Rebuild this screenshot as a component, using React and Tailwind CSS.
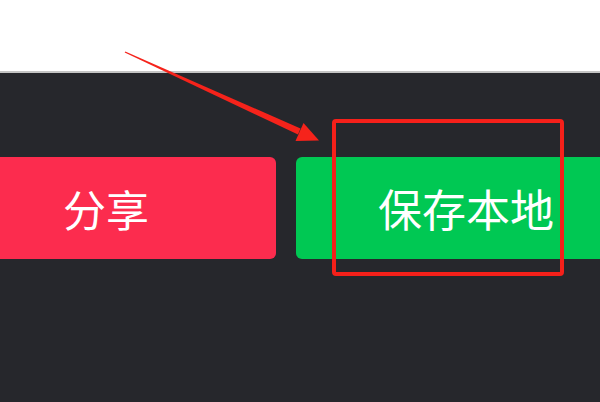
import React from "react";

export default function App() {
  return (
    <div className="relative w-[600px] h-[402px] overflow-hidden bg-white" style={{ fontFamily: '"Noto Sans CJK SC", "Noto Sans", sans-serif' }}>
      <div className="h-[71px] bg-white" />
      <div className="h-[2px] bg-[#c4c4c4]" />
      <div className="h-[329px] bg-[#26272c] pt-[84px]">
        <div className="flex gap-[20px] ml-[-64px]">
          <div className="w-[340px] h-[102px] shrink-0 rounded-[6px] bg-[#fc2c4e] flex items-center justify-center text-white text-[43px] leading-none font-normal">
            分享
          </div>
          <div className="w-[340px] h-[102px] shrink-0 rounded-[6px] bg-[#00c853] flex items-center justify-center text-white text-[44px] leading-none font-normal">
            保存本地
          </div>
        </div>
      </div>

      {/* annotation box */}
      <div className="absolute left-[332px] top-[119px] w-[232px] h-[157px] border-[4px] border-[#f5201a] rounded-[4px]" />

      {/* annotation arrow */}
      <svg className="absolute left-0 top-0" width="600" height="402" viewBox="0 0 600 402">
        <polygon points="125.3,51.5 124.7,52.5 298,134.5 300.5,128.5" fill="#f5231b" />
        <polygon points="319,140.5 303.5,123 295.5,141" fill="#f5231b" />
      </svg>
    </div>
  );
}
